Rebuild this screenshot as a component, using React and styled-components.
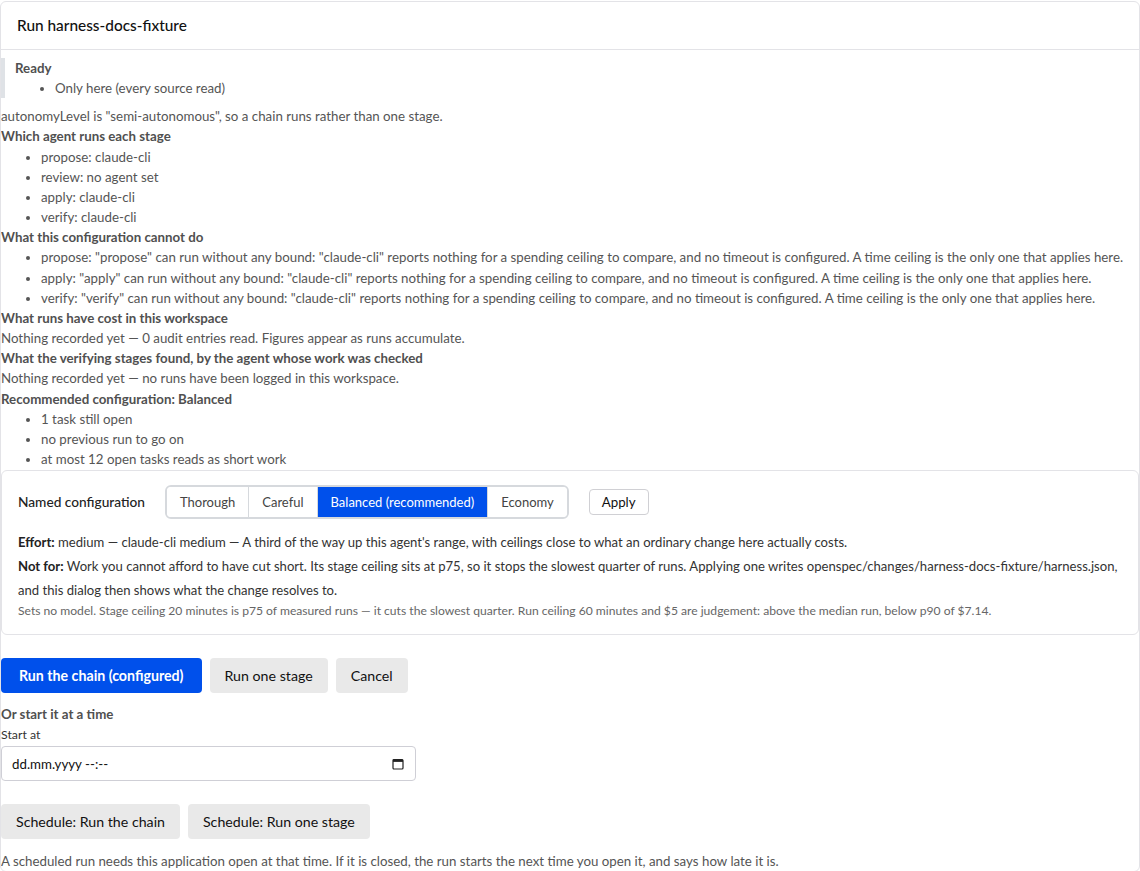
import styled, { createGlobalStyle } from 'styled-components';

const GlobalStyle = createGlobalStyle`
  html, body {
    margin: 0;
    padding: 0;
    background: #ffffff;
  }
  body {
    font-family: Lato, "Noto Sans", "Liberation Sans", sans-serif;
    font-size: 13.3px;
    line-height: 20.15px;
    color: #555555;
  }
  * {
    box-sizing: border-box;
  }
`;

const PRESETS = ['Thorough', 'Careful', 'Balanced (recommended)', 'Economy'];

const LIMITS = ['propose', 'apply', 'verify'];

function CalendarIcon() {
  return (
    <svg width="12" height="12" viewBox="0 0 12 12" aria-hidden="true">
      <rect x="1" y="1.5" width="10" height="9.5" rx="1" fill="none" stroke="#222" strokeWidth="1.2" />
      <rect x="1" y="1.5" width="10" height="2.4" fill="#222" />
    </svg>
  );
}

function App() {
  return (
    <>
      <GlobalStyle />
      <Card>
        <CardHeader>Run harness-docs-fixture</CardHeader>

        <CardBody>
          <Callout>
            <Heading>Ready</Heading>
            <List>
              <li>Only here (every source read)</li>
            </List>
          </Callout>

          <Line>autonomyLevel is &quot;semi-autonomous&quot;, so a chain runs rather than one stage.</Line>

          <Heading>Which agent runs each stage</Heading>
          <List>
            <li>propose: claude-cli</li>
            <li>review: no agent set</li>
            <li>apply: claude-cli</li>
            <li>verify: claude-cli</li>
          </List>

          <Heading>What this configuration cannot do</Heading>
          <List>
            {LIMITS.map((stage) => (
              <li key={stage}>
                {stage}: &quot;{stage}&quot; can run without any bound: &quot;claude-cli&quot; reports nothing for a spending ceiling to compare, and no timeout is configured. A time ceiling is the only one that applies here.
              </li>
            ))}
          </List>

          <Heading>What runs have cost in this workspace</Heading>
          <Line>Nothing recorded yet — 0 audit entries read. Figures appear as runs accumulate.</Line>

          <Heading>What the verifying stages found, by the agent whose work was checked</Heading>
          <Line>Nothing recorded yet — no runs have been logged in this workspace.</Line>

          <Heading>Recommended configuration: Balanced</Heading>
          <List>
            <li>1 task still open</li>
            <li>no previous run to go on</li>
            <li>at most 12 open tasks reads as short work</li>
          </List>

          <ConfigBox>
            <ConfigRow>
              <ConfigLabel>Named configuration</ConfigLabel>
              <Segmented>
                {PRESETS.map((name) => (
                  <Segment key={name} type="button" $active={name.startsWith('Balanced')}>
                    {name}
                  </Segment>
                ))}
              </Segmented>
              <ApplyButton type="button">Apply</ApplyButton>
            </ConfigRow>

            <Detail>
              <strong>Effort:</strong> medium — claude-cli medium — A third of the way up this agent&apos;s range, with ceilings close to what an ordinary change here actually costs.
            </Detail>
            <Detail>
              <strong>Not for:</strong> Work you cannot afford to have cut short. Its stage ceiling sits at p75, so it stops the slowest quarter of runs. Applying one writes openspec/changes/harness-docs-fixture/harness.json, and this dialog then shows what the change resolves to.
            </Detail>
            <Note>
              Sets no model. Stage ceiling 20 minutes is p75 of measured runs — it cuts the slowest quarter. Run ceiling 60 minutes and $5 are judgement: above the median run, below p90 of $7.14.
            </Note>
          </ConfigBox>

          <ButtonRow>
            <Button type="button" $primary>Run the chain (configured)</Button>
            <Button type="button">Run one stage</Button>
            <Button type="button">Cancel</Button>
          </ButtonRow>

          <Heading>Or start it at a time</Heading>
          <FieldLabel>Start at</FieldLabel>
          <DateField>
            <span>dd.mm.yyyy --:--</span>
            <CalendarIcon />
          </DateField>

          <ScheduleRow>
            <Button type="button">Schedule: Run the chain</Button>
            <Button type="button">Schedule: Run one stage</Button>
          </ScheduleRow>

          <Line>A scheduled run needs this application open at that time. If it is closed, the run starts the next time you open it, and says how late it is.</Line>
        </CardBody>
      </Card>
    </>
  );
}

export default App;

const Card = styled.section`
margin-top: 1px;
border: 1px solid #e3e3e7;
border-radius: 6px;
background: #ffffff;
overflow: hidden;
`;

const CardHeader = styled.header`
height: 48px;
display: flex;
align-items: center;
padding: 0 16px;
border-bottom: 1px solid #e3e3e7;
font-size: 15.4px;
font-weight: 500;
color: #111111;
`;

const CardBody = styled.div`
display: flex;
flex-direction: column;
align-items: stretch;
`;

const Callout = styled.div`
margin: 8px 0;
padding-left: 10px;
border-left: 4px solid #dfe2e6;
`;

const Heading = styled.div`
font-weight: 700;
color: #505050;
`;

const Line = styled.div`
color: #555555;
`;

const List = styled.ul`
margin: 0;
padding-left: 40px;

li {
  padding: 0;
}
`;

const ConfigBox = styled.div`
margin-top: 1px;
padding: 14px 16px;
border: 1px solid #e3e3e7;
border-radius: 6px;
`;

const ConfigRow = styled.div`
display: flex;
align-items: center;
gap: 20px;
margin-bottom: 11px;
`;

const ConfigLabel = styled.span`
font-size: 13.7px;
font-weight: 500;
color: #222222;
`;

const Segmented = styled.div`
display: flex;
border: 2px solid #d6d9dd;
border-radius: 6px;
overflow: hidden;
`;

const Segment = styled.button`
height: 30px;
padding: 0 13px;
border: 0;
border-left: 1px solid #d6d9dd;
background: ${(p) => (p.$active ? '#0050eb' : '#ffffff')};
color: ${(p) => (p.$active ? '#ffffff' : '#444444')};
font-family: inherit;
font-size: 13px;
cursor: pointer;

&:first-child {
  border-left: 0;
}
`;

const ApplyButton = styled.button`
height: 26px;
padding: 0 12px;
border: 1px solid #d0d0d4;
border-radius: 4px;
background: #ffffff;
color: #111111;
font-family: inherit;
font-size: 13.3px;
`;

const Detail = styled.p`
margin: 0;
font-size: 13.1px;
line-height: 24px;
color: #333333;

strong {
  color: #222222;
}
`;

const Note = styled.p`
margin: 0;
font-size: 12.12px;
line-height: 18px;
color: #666666;
`;

const ButtonRow = styled.div`
display: flex;
gap: 8px;
margin: 23px 0 11px;
`;

const ScheduleRow = styled.div`
display: flex;
gap: 8px;
margin: 23px 0 12px;
`;

const Button = styled.button`
height: 35px;
padding: ${(p) => (p.$primary ? '0 18px' : '0 15px')};
border: 0;
border-radius: 4px;
background: ${(p) => (p.$primary ? '#0050eb' : '#e9e9e9')};
color: ${(p) => (p.$primary ? '#ffffff' : '#111111')};
font-family: inherit;
font-size: 14.2px;
font-weight: ${(p) => (p.$primary ? 700 : 400)};
cursor: pointer;
`;

const FieldLabel = styled.label`
font-size: 12.3px;
line-height: 22px;
color: #333333;
`;

const DateField = styled.div`
width: 415px;
height: 35px;
display: flex;
align-items: center;
justify-content: space-between;
padding: 0 11px 0 10px;
border: 1px solid #cfcfd6;
border-radius: 4px;
color: #111111;
font-size: 13.3px;
`;
